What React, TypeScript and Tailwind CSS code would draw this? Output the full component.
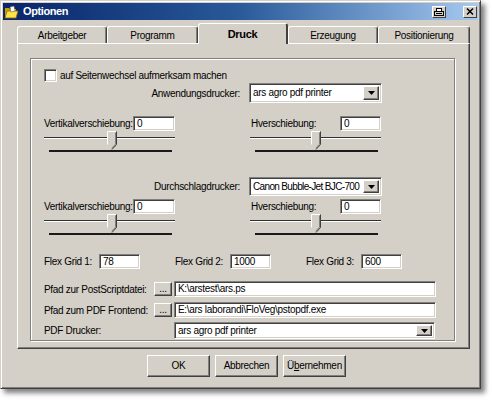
import React from 'react';

const sunken =
  'border border-t-[#808080] border-l-[#808080] border-b-white border-r-white shadow-[inset_1px_1px_0_#404040,inset_-1px_-1px_0_#d4d0c8]';
const raised =
  'border border-t-white border-l-white border-r-[#404040] border-b-[#404040] shadow-[inset_-1px_-1px_0_#808080]';

function TextBox({ value, w, h = 'h-[15px]' }: { value: string; w: string; h?: string }) {
  return (
    <div className={`${sunken} ${w} ${h} bg-white flex items-center pl-[3px] leading-none overflow-hidden whitespace-nowrap`}>
      {value}
    </div>
  );
}

function Select({ value, w, h, text = '' }: { value: string; w: string; h: string; text?: string }) {
  return (
    <div className={`${sunken} ${w} ${h} bg-white flex items-center p-[2px]`}>
      <span className={`flex-1 pl-[1px] whitespace-nowrap overflow-hidden leading-none ${text}`}>{value}</span>
      <span className={`${raised} w-[16px] h-full bg-[#d4d0c8] flex items-center justify-center`}>
        <svg width="7" height="4" viewBox="0 0 7 4">
          <path d="M0 0h7L3.5 4z" fill="#000" />
        </svg>
      </span>
    </div>
  );
}

function Slider({ thumb }: { thumb: string }) {
  return (
    <div className="relative w-[131px] h-[23px] pt-[6px]">
      <div className="h-[1px] bg-[#303030]" />
      <div className="h-[1px] bg-white" />
      <div className="mt-[11px] ml-[5px] mr-[3px] h-[2px] bg-[#1a1a1a]" />
      {/* thumb */}
      <svg className={`absolute top-0 ${thumb}`} width="10" height="19" viewBox="0 0 10 19">
        <path d="M0.5 0.5h9v13l-4.5 5l-4.5-5z" fill="#d4d0c8" />
        <path d="M0.5 13.5v-13h8.5" stroke="#fff" fill="none" />
        <path d="M9.5 0.5v13l-4.5 5" stroke="#404040" fill="none" />
        <path d="M8.5 1.5v11.6l-3.8 4.2" stroke="#808080" fill="none" />
      </svg>
    </div>
  );
}

function Btn({ children, w, h }: { children: React.ReactNode; w: string; h: string }) {
  return (
    <div className={`${raised} ${w} ${h} bg-[#d4d0c8] flex items-center justify-center leading-none`}>
      {children}
    </div>
  );
}

const tabs = ['Arbeitgeber', 'Programm', 'Druck', 'Erzeugung', 'Positionierung'];
const tabWidths = ['w-[90px]', 'w-[91px]', 'w-[90px]', 'w-[90px]', 'w-[92px]'];

export default function App() {
  return (
    <div className="w-[492px] h-[400px] bg-white font-['Liberation_Sans',Arial,sans-serif] text-[10px] tracking-[-0.3px] text-black whitespace-nowrap">
      <div className="w-[481px] h-[389px] bg-[#d4d0c8] border border-t-[#d4d0c8] border-l-[#d4d0c8] border-r-[#404040] border-b-[#404040] shadow-[inset_1px_1px_0_#fff,inset_-1px_-1px_0_#808080,4px_4px_5px_rgba(0,0,0,0.5)] p-[2px] flex flex-col">
        {/* Titelleiste */}
        <div className="h-[17px] bg-linear-to-r from-[#0a246a] via-[#2a5a9a] to-[#a6caf0] flex items-center pl-[1px]">
          <svg width="15" height="14" viewBox="0 0 15 14">
            <path d="M1 3h4l1 1h6v9H1z" fill="#c8a000" />
            <path d="M1 13l2-7h11l-2 7z" fill="#ffe24a" stroke="#8a6a00" strokeWidth="0.8" />
            <path d="M6 2l4-1 1 5-4 1z" fill="#fff" stroke="#555" strokeWidth="0.5" />
          </svg>
          <span className="ml-[4px] text-white font-bold text-[11px] tracking-[-0.4px] leading-none">Optionen</span>
          <div className="ml-auto mr-[17px] w-[14px] h-[12px] bg-[#d4d0c8] border border-t-white border-l-white border-r-[#404040] border-b-[#404040] flex items-center justify-center">
            <svg width="10" height="8" viewBox="0 0 10 8">
              <rect x="2.5" y="0.5" width="5" height="3" fill="#fff" stroke="#000" />
              <rect x="0.5" y="3.5" width="9" height="4" fill="#d4d0c8" stroke="#000" />
              <path d="M2 5.5h6" stroke="#000" />
            </svg>
          </div>
          <div className="mr-[1px] w-[14px] h-[12px] bg-[#d4d0c8] border border-t-white border-l-white border-r-[#404040] border-b-[#404040] flex items-center justify-center">
            <svg width="8" height="7" viewBox="0 0 8 7">
              <path d="M1 0.5l6 6M7 0.5l-6 6" stroke="#000" strokeWidth="1.5" />
            </svg>
          </div>
        </div>

        {/* Reiter */}
        <div className="mt-[3px] h-[20px] pl-[14px] flex items-end">
          {tabs.map((t, i) =>
            t === 'Druck' ? (
              <div
                key={t}
                className={`${tabWidths[i]} relative z-10 -mb-[1px] h-[21px] bg-[#d4d0c8] rounded-t-[3px] border-t border-l border-white border-r-2 border-r-[#404040] flex items-center justify-center font-bold text-[11px] tracking-[-0.3px]`}
              >
                {t}
              </div>
            ) : (
              <div
                key={t}
                className={`${tabWidths[i]} h-[17px] bg-[#d4d0c8] rounded-t-[3px] border-t border-l border-white border-r border-r-[#404040] shadow-[inset_-1px_0_0_#808080] flex items-center justify-center`}
              >
                {t}
              </div>
            ),
          )}
        </div>

        {/* Registerkarte */}
        <div className="ml-[14px] w-[453px] h-[306px] border border-t-white border-l-white border-r-[#404040] border-b-[#404040] shadow-[inset_-1px_-1px_0_#808080] flex flex-col">
          <div className="mt-[14px] ml-[12px] w-[425px] h-[283px] border border-[#808080] shadow-[1px_1px_0_#fff,inset_1px_1px_0_#fff] pl-[13px] flex flex-col">
            <div className="mt-[10px] h-[13px] flex items-center">
              <div className={`${sunken} w-[13px] h-[13px] bg-white`} />
              <span className="ml-[3px]">auf Seitenwechsel aufmerksam machen</span>
            </div>

            <div className="mt-[1px] h-[20px] flex items-center">
              <span className="w-[196px] text-right">Anwendungsdrucker:</span>
              <div className="ml-[9px]">
                <Select value="ars agro pdf printer" w="w-[133px]" h="h-[20px]" />
              </div>
            </div>

            <div className="mt-[13px] h-[15px] flex items-center">
              <div className="w-[207px] flex items-center">
                <span className="w-[89px]">Vertikalverschiebung:</span>
                <TextBox value="0" w="w-[42px]" />
              </div>
              <div className="flex items-center">
                <span className="w-[89px]">Hverschiebung:</span>
                <TextBox value="0" w="w-[41px]" />
              </div>
            </div>

            <div className="flex">
              <Slider thumb="left-[63px]" />
              <div className="ml-[75px]">
                <Slider thumb="left-[61px]" />
              </div>
            </div>

            <div className="mt-[23px] h-[19px] flex items-center">
              <span className="w-[196px] text-right">Durchschlagdrucker:</span>
              <div className="ml-[9px]">
                <Select
                  value="Canon Bubble-Jet BJC-700"
                  w="w-[133px]"
                  h="h-[19px]"
                  text="text-[10px] tracking-[-0.65px]"
                />
              </div>
            </div>

            <div className="mt-[3px] h-[15px] flex items-center">
              <div className="w-[207px] flex items-center">
                <span className="w-[89px]">Vertikalverschiebung:</span>
                <TextBox value="0" w="w-[42px]" />
              </div>
              <div className="flex items-center">
                <span className="w-[89px]">Hverschiebung:</span>
                <TextBox value="0" w="w-[41px]" />
              </div>
            </div>

            <div className="flex">
              <Slider thumb="left-[63px]" />
              <div className="ml-[75px]">
                <Slider thumb="left-[61px]" />
              </div>
            </div>

            <div className="mt-[17px] h-[15px] flex items-center">
              {[
                ['Flex Grid 1:', '78'],
                ['Flex Grid 2:', '1000'],
                ['Flex Grid 3:', '600'],
              ].map(([l, v]) => (
                <div key={l} className="w-[131px] flex items-center">
                  <span className="w-[55px]">{l}</span>
                  <TextBox value={v} w="w-[41px]" />
                </div>
              ))}
            </div>

            <div className="mt-[12px] h-[16px] flex items-center">
              <span className="w-[110px]">Pfad zur PostScriptdatei:</span>
              <Btn w="w-[18px]" h="h-[14px]">...</Btn>
              <div className="ml-[2px]">
                <TextBox value="K:\arstest\ars.ps" w="w-[262px]" h="h-[16px]" />
              </div>
            </div>

            <div className="mt-[5px] h-[16px] flex items-center">
              <span className="w-[110px]">Pfad zum PDF Frontend:</span>
              <Btn w="w-[18px]" h="h-[14px]">...</Btn>
              <div className="ml-[2px]">
                <TextBox value="E:\ars laborandi\FloVeg\pstopdf.exe" w="w-[262px]" h="h-[16px]" />
              </div>
            </div>

            <div className="mt-[4px] h-[17px] flex items-center">
              <span className="w-[130px]">PDF Drucker:</span>
              <Select value="ars agro pdf printer" w="w-[261px]" h="h-[17px]" />
            </div>
          </div>
        </div>

        {/* Schaltflächen */}
        <div className="mt-[6px] pl-[144px] flex gap-[5px]">
          <Btn w="w-[63px]" h="h-[22px]">OK</Btn>
          <Btn w="w-[63px]" h="h-[22px]">Abbrechen</Btn>
          <Btn w="w-[63px]" h="h-[22px]">
            <span>
              Ü<span className="underline">b</span>ernehmen
            </span>
          </Btn>
        </div>
      </div>
    </div>
  );
}
